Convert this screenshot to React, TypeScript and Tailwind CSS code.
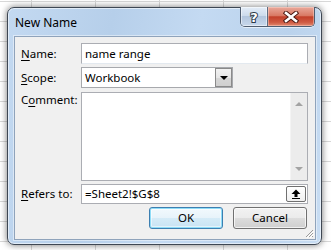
import React from 'react'

function Label({ text, k, className = '' }: { text: string; k: number; className?: string }) {
  return (
    <div className={`w-[60px] shrink-0 ${className}`}>
      {text.slice(0, k)}
      <span className="underline underline-offset-2">{text[k]}</span>
      {text.slice(k + 1)}
    </div>
  )
}

function TitleButtons() {
  return (
    <div className="flex h-[20px] -mt-[1px] rounded-b-[5px] border border-t-0 border-[#4f5d70] shadow-[0_1px_0_rgba(255,255,255,0.6)] overflow-hidden">
      <div className="w-[27px] h-full flex items-center justify-center bg-[linear-gradient(to_bottom,#e4edf8_0%,#cddbec_45%,#b3c6de_50%,#c8d8ec_100%)] border-r border-[#5e6d82] shadow-[inset_0_0_0_1px_rgba(255,255,255,0.5)]">
        <svg width="16" height="18" viewBox="0 0 16 18" overflow="visible">
          <text x="8" y="14" textAnchor="middle" fontFamily="DejaVu Sans, sans-serif" fontWeight="bold" fontSize="13" fill="#ffffff" stroke="#2e3a48" strokeWidth="2" paintOrder="stroke">?</text>
        </svg>
      </div>
      <div className="w-[46px] h-full flex items-center justify-center bg-[linear-gradient(to_bottom,#e9a99b_0%,#d97a65_45%,#c2402a_52%,#cf5a42_80%,#e08a70_100%)] shadow-[inset_0_0_0_1px_rgba(255,220,210,0.45)]">
        <svg width="16" height="12" viewBox="0 0 16 12">
          <path d="M3 2 L13 10 M13 2 L3 10" stroke="#4a1a14" strokeWidth="4.5" strokeLinecap="square" />
          <path d="M3 2 L13 10 M13 2 L3 10" stroke="#ffffff" strokeWidth="2.6" strokeLinecap="square" />
        </svg>
      </div>
    </div>
  )
}

function Combo() {
  return (
    <div className="w-[152px] h-[21px] flex items-center border border-[#a7a9ad] bg-white">
      <div className="flex-1 pl-[3px]">Workbook</div>
      <div className="w-[17px] h-[19px] flex items-center justify-center border border-[#8a8a8a] bg-[linear-gradient(to_bottom,#f2f2f2_0%,#e6e6e6_50%,#d6d6d6_51%,#cfcfcf_100%)]">
        <svg width="8" height="4" viewBox="0 0 8 4">
          <path d="M0 0 H8 L4 4 Z" fill="#000" />
        </svg>
      </div>
    </div>
  )
}

function ScrollArrow({ up }: { up?: boolean }) {
  return (
    <svg width="8" height="4" viewBox="0 0 8 4">
      <path d={up ? 'M0 4 H8 L4 0 Z' : 'M0 0 H8 L4 4 Z'} fill="#a3a3a3" />
    </svg>
  )
}

function Grip() {
  return (
    <svg width="10" height="10" viewBox="0 0 10 10" className="absolute right-[1px] bottom-[1px]">
      <path d="M9 2 L2 9 M9 5 L5 9 M9 8 L8 9" stroke="#9a9a9a" strokeWidth="1" />
      <path d="M10 3 L3 10 M10 6 L6 10" stroke="#ffffff" strokeWidth="1" />
    </svg>
  )
}

export default function App() {
  return (
    <div className="w-[331px] h-[250px] overflow-hidden bg-white bg-[linear-gradient(to_right,#d8d8d8_1px,transparent_1px),linear-gradient(to_bottom,#d8d8d8_1px,transparent_1px)] bg-size-[64px_20px] bg-position-[31px_1px] pl-[7px] pt-[7px] font-['Noto_Sans',sans-serif] text-[11.5px] text-black">
      <div className="w-[315px] h-[238px] rounded-[7px] border border-[#3e4753] bg-[linear-gradient(100deg,#c3d9f1_0%,#b6cfea_30%,#c4daf2_55%,#bad2ec_80%,#c8ddf3_100%)] shadow-[inset_0_0_0_1px_rgba(255,255,255,0.55),0_0_7px_rgba(0,0,0,0.55)] flex flex-col">
        <div className="h-[28px] shrink-0 flex justify-between pl-[7px] pr-[6px]">
          <div className="pt-[7px] leading-[16px] text-[12px]">New Name</div>
          <TitleButtons />
        </div>
        <div className="relative ml-[6px] w-[302px] h-[204px] border border-[#8fa3bb] bg-[#f0f0f0] shadow-[0_0_0_1px_rgba(255,255,255,0.45)] pl-[6px] pt-[6px] flex flex-col">
          <div className="flex items-center h-[21px]">
            <Label text="Name:" k={0} />
            <div className="w-[227px] h-[21px] flex items-center border border-[#abadb3] border-b-[#e3e9ef] bg-white pl-[3px]">name range</div>
          </div>
          <div className="flex items-center h-[21px] mt-[3px]">
            <Label text="Scope:" k={0} />
            <Combo />
          </div>
          <div className="flex items-start mt-[4px]">
            <Label text="Comment:" k={1} className="-mt-[1px]" />
            <div className="w-[227px] h-[89px] border border-[#abadb3] bg-white flex justify-end">
              <div className="w-[17px] h-full bg-[#ececec] border-l border-[#f4f4f4] flex flex-col items-center justify-between py-[9px]">
                <ScrollArrow up />
                <ScrollArrow />
              </div>
            </div>
          </div>
          <div className="flex items-center h-[20px] mt-[3px]">
            <Label text="Refers to:" k={0} />
            <div className="w-[227px] h-[20px] flex items-center border border-[#abadb3] bg-white pl-[3px] pr-[1px]">
              <div className="flex-1">=Sheet2!$G$8</div>
              <div className="w-[20px] h-[16px] flex items-center justify-center rounded-[2px] border border-[#707070] bg-[linear-gradient(to_bottom,#ffffff,#f0f0f0)]">
                <svg width="10" height="10" viewBox="0 0 10 10">
                  <path d="M5 0.5 L9.5 5 H6.5 V8 H3.5 V5 H0.5 Z" fill="#000" />
                  <rect x="1" y="9" width="8" height="1" fill="#000" />
                </svg>
              </div>
            </div>
          </div>
          <div className="flex justify-end gap-[10px] mt-[3px] pr-[8px]">
            <div className="w-[74px] h-[22px] flex items-center justify-center rounded-[3px] border border-[#3c7fb1] bg-[linear-gradient(to_bottom,#f2f9fd_0%,#e7f3fa_50%,#d5ebf7_51%,#c8e3f3_100%)] shadow-[inset_0_0_0_1px_#8fdcf7,inset_0_0_0_2px_rgba(255,255,255,0.5)]">
              OK
            </div>
            <div className="w-[74px] h-[22px] flex items-center justify-center rounded-[3px] border border-[#707070] bg-[linear-gradient(to_bottom,#f2f2f2_0%,#ebebeb_50%,#dddddd_51%,#cfcfcf_100%)] shadow-[inset_0_0_0_1px_rgba(255,255,255,0.7)]">
              Cancel
            </div>
          </div>
          <Grip />
        </div>
      </div>
    </div>
  )
}
